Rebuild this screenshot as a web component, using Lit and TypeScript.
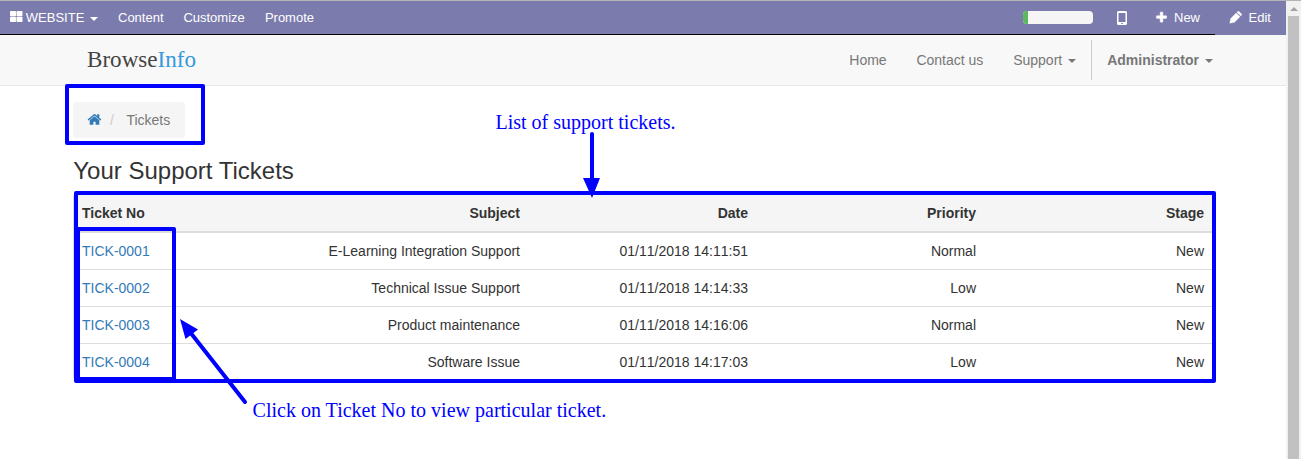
import { LitElement, html, css, svg } from "lit";
import { customElement } from "lit/decorators.js";

const tickets = [
  ["TICK-0001", "E-Learning Integration Support", "01/11/2018 14:11:51", "Normal", "New"],
  ["TICK-0002", "Technical Issue Support", "01/11/2018 14:14:33", "Low", "New"],
  ["TICK-0003", "Product maintenance", "01/11/2018 14:16:06", "Normal", "New"],
  ["TICK-0004", "Software Issue", "01/11/2018 14:17:03", "Low", "New"],
];

const shapes = {
  grid: svg`<rect x="0" y="0" width="6" height="5.200" rx=".8"/><rect x="6.500" y="0" width="6" height="5.200" rx=".8"/><rect x="0" y="5.800" width="6" height="5.200" rx=".8"/><rect x="6.500" y="5.800" width="6" height="5.200" rx=".8"/>`,
  plus: svg`<path d="M1600 736v192q0 40-28 68t-68 28h-416v416q0 40-28 68t-68 28h-192q-40 0-68-28t-28-68v-416h-416q-40 0-68-28t-28-68v-192q0-40 28-68t68-28h416v-416q0-40 28-68t68-28h192q40 0 68 28t28 68v416h416q40 0 68 28t28 68z"/>`,
  home: svg`<path d="M1472 992v480q0 26-19 45t-45 19h-384v-384h-256v384h-384q-26 0-45-19t-19-45v-480q0-1 .5-3t.5-3l575-474 575 474q1 2 1 6zm223-69l-62 74q-8 9-21 11h-3q-13 0-21-7l-692-577-692 577q-12 8-24 7-13-2-21-11l-62-74q-8-10-7-23.5t11-21.5l719-599q32-26 76-26t76 26l244 204v-195q0-14 9-23t23-9h192q14 0 23 9t9 23v408l219 182q10 8 11 21.5t-7 23.5z"/>`,
};

@customElement("app-root")
export class AppRoot extends LitElement {
  static styles = css`
    :host { display: flex; position: relative; width: 1301px; height: 459px; overflow: hidden; background: #fff; color: #333; font: 14px/20px "Liberation Sans", Arial, sans-serif; box-sizing: border-box; border-top: 1px solid #b4b4b4; }
    * { box-sizing: border-box; }
    svg { display: block; fill: currentColor; flex: none; }
    a { color: #337ab7; }
    .page { width: 1286px; flex: none; }
    .bar { display: flex; height: 34px; background: #7c7bad; color: #fff; font-size: 13px; line-height: 33px; }
    .main { display: flex; align-items: center; width: 1215px; height: 34px; padding-left: 10px; border-bottom: 1px solid #000; }
    .main .label { margin-left: 2.800px; }
    .grid { margin-top: -2px; }
    .caret { width: 0; height: 0; border: 4px solid transparent; border-top-color: currentColor; border-bottom: 0; flex: none; }
    .main .caret { margin: 2px 20px 0 5.700px; }
    .item { width: 65.4px; }
    .item.wide { width: 81.5px; }
    .progress { width: 70px; height: 13px; border-radius: 4px; background: #f5f5f5; overflow: hidden; margin: 0 24px 0 auto; }
    .done { width: 5px; height: 13px; background: #5cb85c; }
    .add { display: flex; align-items: center; width: 60px; margin-left: 28px; }
    .add svg { stroke: currentColor; stroke-width: 60; }
    .add span { margin-left: 6px; }
    .edit { display: flex; align-items: center; height: 33px; padding-left: 14px; }
    .edit svg { stroke: currentColor; stroke-width: .3; }
    .edit span { margin-left: 6.500px; }
    .nav { display: flex; height: 51px; background: #f8f8f8; border-bottom: 1px solid #e7e7e7; color: #777; padding: 5px 73px 5px 87px; }
    .brand { font: 23.1px/38px "Liberation Serif", serif; color: #444; }
    .brand span { color: #3498db; }
    .links { display: flex; margin-left: auto; line-height: 40px; }
    .links div { display: flex; align-items: center; margin-left: 29.800px; }
    .links .caret { margin: 1px 0 0 6px; }
    .links .admin { border-left: 1px solid #ccc; margin-left: 15px; padding-left: 15px; font-weight: bold; }
    .content { padding: 16px 73px 0; }
    .crumb { display: inline-flex; align-items: center; width: 112px; height: 36px; padding-left: 14px; background: #f5f5f5; border-radius: 4px; color: #777; }
    .crumb svg { margin-top: -1px; }
    .slash { color: #ccc; margin: 0 12.500px 0 8px; }
    h3 { font-size: 24px; line-height: 26px; font-weight: 400; margin: 20px 0 9px .3px; }
    .crumbs { display: flex; }
    .panel { border: 1px solid #ddd; border-radius: 4px; overflow: hidden; width: 1140px; }
    .row { display: grid; grid-template-columns: 226px repeat(4, 228px); padding: 8px 0; border-top: 1px solid #ddd; }
    .row > * { padding: 0 8px; text-align: right; }
    .row > :first-child { text-align: left; grid-column: 1; grid-row: 1; padding-right: 0; width: 100px; }
    .row > :nth-child(2) { grid-column: 1 / 3; grid-row: 1; }
    .row > :nth-child(3) { font-kerning: none; }
    .row.head { background: #f5f5f5; font-weight: bold; border: 0; padding: 9px 0 8px; height: 37px; }
    .head + .row { border-top-width: 2px; }
    .scroll { display: flex; flex-direction: column; align-items: center; width: 15px; background: #f1f1f1; }
    .up { width: 0; height: 0; border: 4px solid transparent; border-top: 0; border-bottom-color: #a3a3a3; margin: 6px 0 5px; }
    .thumb { width: 11px; flex: 1; background: #c1c1c1; }
    .marks { position: absolute; left: 0; top: -1px; fill: none; }
    .note { position: absolute; font: 20px/24px "Liberation Serif", serif; color: #00f; white-space: nowrap; }
    .list { left: 495.500px; top: 109px; }
    .click { left: 252.600px; top: 397px; font-size: 20.030px; }
  `;

  render() {
    return html`
      <div class="page">
        <div class="bar">
          <div class="main">
            <svg class="grid" width="13" height="11" viewBox="0 0 13 11">${shapes.grid}</svg>
            <span class="label">WEBSITE</span><i class="caret"></i>
            <span class="item">Content</span><span class="item wide">Customize</span><span>Promote</span>
            <div class="progress"><div class="done"></div></div>
            <svg width="10" height="14" viewBox="0 0 10 14"><path fill-rule="evenodd" d="M1.500 0h7A1.500 1.500 0 0 1 10 1.500v11A1.500 1.500 0 0 1 8.500 14h-7A1.500 1.500 0 0 1 0 12.500v-11A1.500 1.500 0 0 1 1.500 0zM1.500 2v9h7V2zM4.200 12v1h1.600v-1z"/></svg>
            <div class="add"><svg width="13" height="13" viewBox="0 0 1792 1792">${shapes.plus}</svg><span>New</span></div>
          </div>
          <div class="edit">
            <svg width="13" height="13" viewBox="0 0 13 13"><path d="M1.700 7.500 7.200 2l3.800 3.800-5.500 5.500L.7 12.300zM7.900 1.300l.8-.8q.7-.6 1.400 0l2.400 2.400q.6.700 0 1.400l-.8.800z"/></svg>
            <span>Edit</span>
          </div>
        </div>
        <div class="nav">
          <div class="brand">Browse<span>Info</span></div>
          <div class="links">
            <div>Home</div><div>Contact us</div><div>Support<i class="caret"></i></div>
            <div class="admin">Administrator<i class="caret"></i></div>
          </div>
        </div>
        <div class="content">
          <div class="crumbs"><div class="crumb"><a><svg width="15" height="15" viewBox="0 0 1792 1792">${shapes.home}</svg></a><span class="slash">/</span><span>Tickets</span></div></div>
          <h3>Your Support Tickets</h3>
          <div class="panel">
            <div class="row head"><span>Ticket No</span><span>Subject</span><span>Date</span><span>Priority</span><span>Stage</span></div>
            ${tickets.map(t => html`<div class="row">${t.map((c, i) => (i ? html`<span>${c}</span>` : html`<a>${c}</a>`))}</div>`)}
          </div>
        </div>
      </div>
      <div class="scroll"><div class="up"></div><div class="thumb"></div></div>
      <svg class="marks" width="1301" height="459" stroke="#00f" stroke-width="4" stroke-linejoin="round" stroke-linecap="round">
        <rect x="67" y="86" width="136" height="57"/>
        <rect x="76" y="193" width="1138" height="188"/>
        <rect x="78" y="229" width="96" height="150"/>
        <path d="M592 134V180M245 402L190 332"/>
        <path stroke="none" fill="#00f" d="M583 178h17l-8 20zM180 319l18 10.500-12.500 9.500z"/>
      </svg>
      <div class="note list">List of support tickets.</div>
      <div class="note click">Click on Ticket No to view particular ticket.</div>
    `;
  }
}
